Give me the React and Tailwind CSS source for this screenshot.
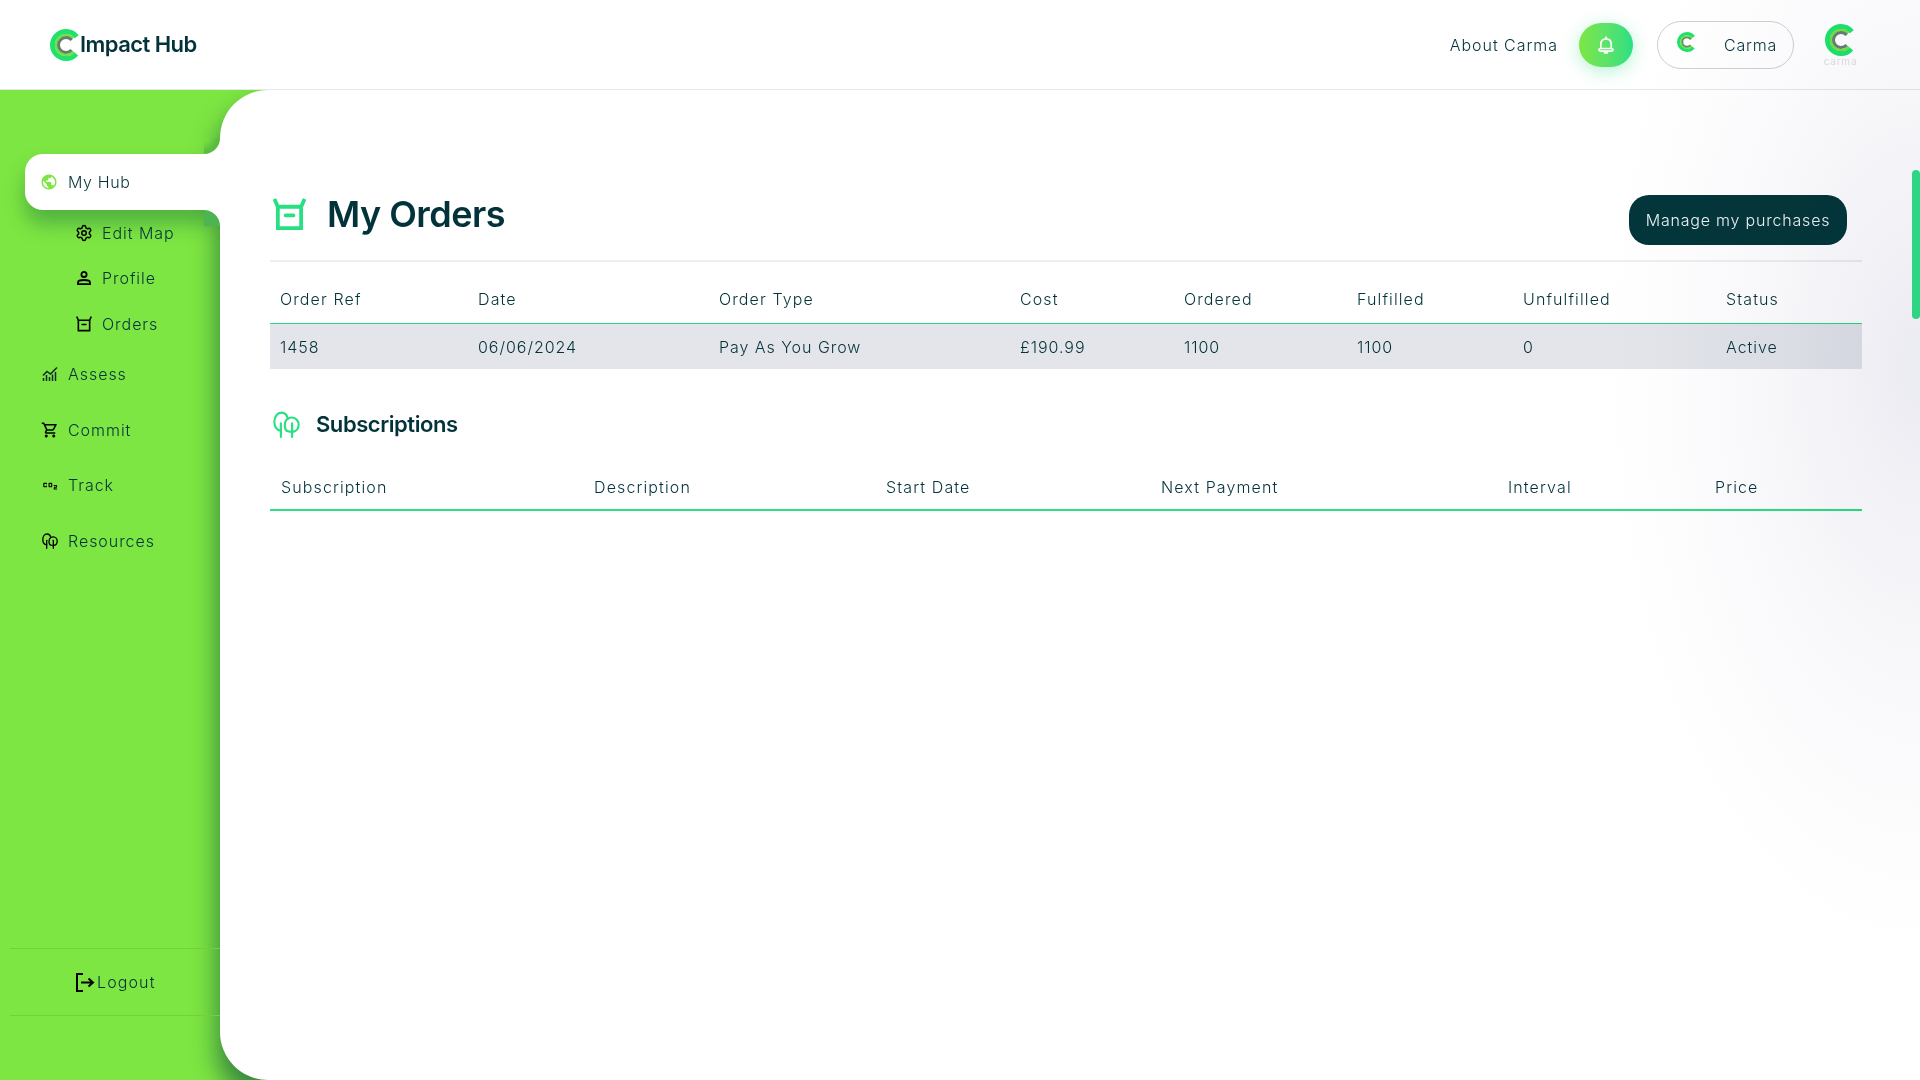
import React from "react";
import { MdPublic, MdCo2, MdOutlineShoppingCart } from "react-icons/md";
import { Settings } from "lucide-react";

const Logo = ({ size = 32, soft = false }) => (
  <svg width={size} height={size} viewBox="0 0 32 32" fill="none">
    <circle cx="16" cy="16" r="13.5" stroke="#1ee26c" strokeWidth="5" strokeDasharray="66 19" strokeDashoffset="-9.5" />
    <circle cx="16" cy="16" r="10" stroke="#6fe33f" strokeWidth="2.5" strokeDasharray="48 15" strokeDashoffset="-7" />
    <circle cx="16" cy="16" r="7.5" stroke={soft ? "#5f8f6a" : "#667d74"} strokeWidth="3" strokeDasharray="36 11" strokeDashoffset="-5.5" />
  </svg>
);

const Box = ({ size = 20, color = "#000", sw = 2 }) => (
  <svg width={size} height={size} viewBox="0 0 34 34" fill="none" stroke={color} strokeWidth={sw * 1.7}>
    <path d="M1.5 1 L5 9 H29 L32.5 1" />
    <path d="M5 9 V31 H29 V9" />
    <path d="M13 18 H21" strokeLinecap="round" />
  </svg>
);

const Trees = ({ size = 20, color = "#000", sw = 2 }) => (
  <svg width={size} height={size} viewBox="0 0 24 24" fill="none" stroke={color} strokeWidth={sw} strokeLinecap="round" strokeLinejoin="round">
    <path d="M7 23 V11" />
    <path d="M17 23 V11" />
    <path d="M7 17.5 C3.5 17.5 1.2 14.2 1.2 9.8 C1.2 5 3.8 1.5 7.5 1.5 C10.5 1.5 12.5 3.8 13.2 6.8 C10.8 8.3 10.5 10.8 10.5 13 C10.5 15 11 16.3 12 17.5" />
    <path d="M13.2 6.8 C14.2 6.2 15.6 5.8 17 5.8 C20.3 5.8 22.8 8.8 22.8 12.3 C22.8 15.8 20.5 18.5 17 18.5 C15 18.5 13 18.3 12 17.5" />
  </svg>
);

const Person = () => (
  <svg width="16" height="16" viewBox="0 0 16 16" fill="none" stroke="#000" strokeWidth="1.8">
    <circle cx="8" cy="4.4" r="2.6" />
    <path d="M2 14.2 V12.4 C2 10.8 5 10 8 10 C11 10 14 10.8 14 12.4 V14.2 Z" />
  </svg>
);

const Chart = () => (
  <svg width="16" height="16" viewBox="0 0 16 16" fill="none" stroke="#102a2a" strokeWidth="1.5">
    <path d="M1 9.5 L5 5.5 L8.5 8 L15 1.5" />
    <path d="M1.5 15 V12 M4.5 15 V9 M7.5 15 V11 M10.5 15 V8.5 M13.5 15 V6" />
  </svg>
);

const LogoutIcon = () => (
  <svg width="20" height="20" viewBox="0 0 20 20" fill="none" stroke="#000" strokeWidth="2">
    <path d="M8 2 H2 V19 H8" />
    <path d="M6 10.5 H18 M13.5 6.5 L18 10.5 L13.5 14.5" />
  </svg>
);

const BellIcon = () => (
  <svg width="16" height="18" viewBox="0 0 16 18" fill="none" stroke="#fff" strokeWidth="1.7" strokeLinecap="round" strokeLinejoin="round">
    <path d="M8 1 V2.5" />
    <path d="M2.8 12.5 V8 C2.8 4.8 5 2.8 8 2.8 C11 2.8 13.2 4.8 13.2 8 V12.5" />
    <rect x="1" y="12.5" width="14" height="2.6" rx="1.3" />
    <path d="M6.5 16.8 H9.5" />
  </svg>
);

const font = "[font-family:Inter,'Liberation_Sans',sans-serif]";

const SubItem = ({ icon, label }) => (
  <div className="relative h-[45.5px] pl-[75px] flex items-center gap-[9px] text-[16px] tracking-[0.06em] text-[#03333a]">
    <span className="w-[18px] flex justify-center">{icon}</span>
    <span className="font-light">{label}</span>
  </div>
);
const MainItem = ({ icon, label }) => (
  <div className="relative h-[55.5px] pl-[41px] flex items-center gap-[9px] text-[16px] tracking-[0.06em] text-[#03333a]">
    <span className="w-[18px] flex justify-center">{icon}</span>
    <span className="font-light">{label}</span>
  </div>
);

const orderCols = "grid-cols-[198px_241px_301px_164px_173px_166px_203px_1fr]";
const subCols = "grid-cols-[313px_292px_275px_347px_207px_1fr]";

export default function App() {
  return (
    <div className={`relative h-screen w-full overflow-hidden bg-white flex flex-col ${font}`}>
      <header className="relative z-20 h-[90px] shrink-0 border-b border-[#e5e7eb] bg-white flex items-center pl-[50px] pr-[58px]">
        <Logo size={32} />
        <span className="-ml-[2px] text-[22px] font-semibold tracking-[-0.025em] text-[#03333a]">Impact Hub</span>
        <div className="ml-auto flex items-center">
          <span className="text-[16px] font-light tracking-[0.06em] text-[#03333a]">About Carma</span>
          <button className="ml-[21px] w-[54px] h-[44px] rounded-[22px] bg-gradient-to-r from-[#7de642] to-[#28df82] flex items-center justify-center shadow-[0_4px_18px_rgba(40,223,130,0.35)]">
            <BellIcon />
          </button>
          <div className="ml-[24px] w-[137px] h-[48px] rounded-[24px] border border-[#cfcfcf] flex items-center pl-[19px]">
            <div className="flex flex-col items-center -mt-[6px]">
              <Logo size={20} soft />
            </div>
            <span className="ml-[27px] text-[16px] font-light tracking-[0.05em] text-[#03333a]">Carma</span>
          </div>
          <div className="ml-[24px] w-[44px] flex flex-col items-center pl-[1px]">
            <Logo size={32} />
            <span className="text-[10px] leading-[10px] tracking-[0.08em] text-[#e0e0e0]">carma</span>
          </div>
        </div>
      </header>

      <div className="relative flex-1 flex bg-[#7de642] min-h-0">
        <aside className="relative z-10 w-[220px] shrink-0 overflow-hidden flex flex-col pt-[64px]">
          <div className="relative h-[56px] ml-[25px] bg-white rounded-l-[18px] flex items-center pl-[15px] gap-[10px] shadow-[0_14px_20px_rgba(0,80,60,0.35)] text-[16px] tracking-[0.04em] text-[#03333a]">
            <MdPublic size={18} color="#7de642" />
            <span className="font-light">My Hub</span>
            <div className="absolute right-0 -top-[16px] w-[16px] h-[16px] bg-white">
              <div className="w-full h-full bg-[#7de642] rounded-br-[16px] shadow-[inset_-6px_-5px_8px_rgba(0,80,60,0.3)]" />
            </div>
            <div className="absolute right-0 -bottom-[16px] w-[16px] h-[16px] bg-white">
              <div className="w-full h-full bg-[#4cb552] rounded-tr-[16px]" />
            </div>
          </div>
          <SubItem icon={<Settings size={18} color="#000" strokeWidth={2} />} label="Edit Map" />
          <SubItem icon={<Person />} label="Profile" />
          <SubItem icon={<Box size={16} />} label="Orders" />
          <MainItem icon={<Chart />} label="Assess" />
          <MainItem icon={<MdOutlineShoppingCart size={18} color="#000" />} label="Commit" />
          <MainItem icon={<MdCo2 size={20} color="#000" />} label="Track" />
          <MainItem icon={<Trees size={16} />} label="Resources" />
          <div className="relative mt-auto mb-[64px] ml-[10px] h-[68px] border-y border-[#6fd23e] flex items-center pl-[65px] gap-[2px] text-[16px] tracking-[0.07em] text-[#03333a]">
            <LogoutIcon />
            <span className="font-light">Logout</span>
          </div>
        </aside>

        <main className="relative z-0 flex-1 min-w-0 bg-white rounded-l-[48px] shadow-[0_18px_24px_3px_rgba(0,60,60,0.55)] pl-[50px] pr-[58px] text-[#03333a]">
          <div className="pt-[105px] pb-[15px] pr-[15px] border-b-2 border-[#eeeeee] flex items-start">
            <span className="ml-[3px] mt-[3px]"><Box size={33} color="#28df82" sw={2.3} /></span>
            <h1 className="ml-[21px] text-[36px] leading-[38px] font-semibold tracking-[-0.015em] text-[#03333a]">My Orders</h1>
            <button className="ml-auto w-[218px] h-[50px] rounded-[20px] bg-[#03363a] text-[#f2f5f5] text-[16px] font-light tracking-[0.05em]">Manage my purchases</button>
          </div>

          <div className={`grid ${orderCols} h-[61px] items-center pl-[10px] pt-[12px] text-[16px] font-light tracking-[0.07em]`}>
            {["Order Ref", "Date", "Order Type", "Cost", "Ordered", "Fulfilled", "Unfulfilled", "Status"].map((t) => (
              <div key={t}>{t}</div>
            ))}
          </div>
          <div className={`grid ${orderCols} h-[46px] items-center pl-[10px] border-t border-[#2dd584] bg-[#e3e5ea] text-[16px] font-light tracking-[0.06em]`}>
            {["1458", "06/06/2024", "Pay As You Grow", "£190.99", "1100", "1100", "0", "Active"].map((t, i) => (
              <div key={i}>{t}</div>
            ))}
          </div>

          <div className="mt-[41px] h-[28px] flex items-center pl-[3px]">
            <Trees size={27} color="#28df82" sw={1.9} />
            <h2 className="ml-[16px] text-[22px] font-semibold tracking-[-0.02em] text-[#03333a]">Subscriptions</h2>
          </div>

          <div className={`mt-[29px] grid ${subCols} h-[44px] items-center pl-[11px] pb-[2px] border-b-2 border-[#2bdf82] text-[16px] font-light tracking-[0.07em]`}>
            {["Subscription", "Description", "Start Date", "Next Payment", "Interval", "Price"].map((t) => (
              <div key={t}>{t}</div>
            ))}
          </div>
        </main>
      </div>

      <div className="absolute z-30 right-0 top-0 w-[340px] h-[960px] pointer-events-none mix-blend-multiply bg-[radial-gradient(ellipse_320px_600px_at_100%_38%,#ebebf2,#f7f7fa_45%,#fdfdfe_80%,#ffffff_100%)]" />
      <div className="absolute z-40 right-0 top-[170px] w-[8px] h-[149px] rounded-[4px] bg-[#2dd584]" />
    </div>
  );
}
